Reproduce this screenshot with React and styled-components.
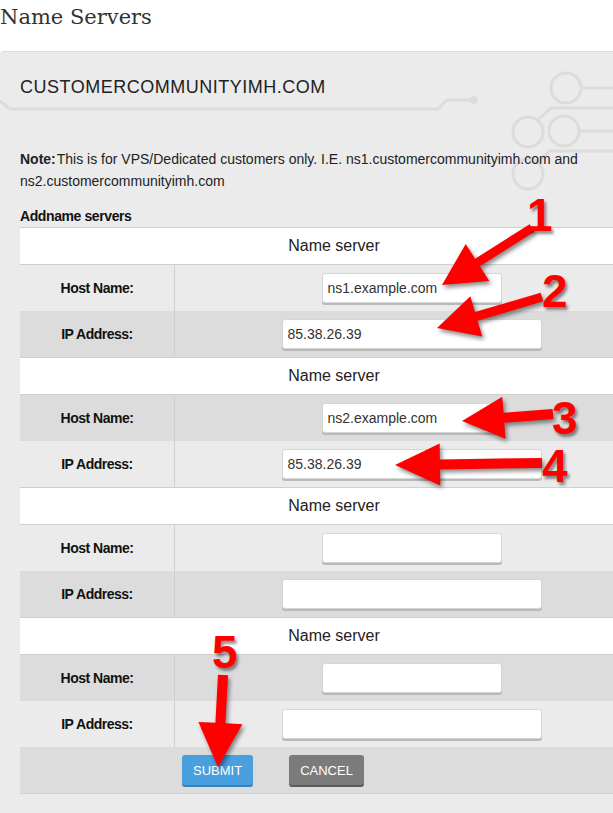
import React from 'react';
import styled, { createGlobalStyle } from 'styled-components';

const GlobalStyle = createGlobalStyle`
  body {
    margin: 0;
    background: #fff;
    font-family: "Liberation Sans", Arial, sans-serif;
    overflow: hidden;
  }
`;

const servers = [
  { host: 'ns1.example.com', ip: '85.38.26.39' },
  { host: 'ns2.example.com', ip: '85.38.26.39' },
  { host: '', ip: '' },
  { host: '', ip: '' },
];

// red callouts drawn on top of the screenshot
const arrows = [
  { from: [532, 228], to: [442, 285], w: 9, head: 42, half: 22 },
  { from: [542, 297], to: [437, 328], w: 9, head: 41, half: 21 },
  { from: [553, 414], to: [462, 421], w: 10, head: 42, half: 21 },
  { from: [542, 463], to: [395, 465], w: 10, head: 45, half: 21 },
  { from: [223, 675], to: [218, 767], w: 10, head: 44, half: 22 },
];

const callouts = [
  { n: 1, x: 527, y: 192 },
  { n: 2, x: 542, y: 268 },
  { n: 3, x: 552, y: 395 },
  { n: 4, x: 542, y: 443 },
  { n: 5, x: 212, y: 629 },
];

const arrowPoints = ({ from, to, w, head, half }) => {
  const [x1, y1] = from;
  const [x2, y2] = to;
  const len = Math.hypot(x2 - x1, y2 - y1);
  const ux = (x2 - x1) / len;
  const uy = (y2 - y1) / len;
  const px = -uy;
  const py = ux;
  const bx = x2 - ux * head;
  const by = y2 - uy * head;
  return [
    [x1 + (px * w) / 2, y1 + (py * w) / 2],
    [bx + (px * w) / 2, by + (py * w) / 2],
    [bx + px * half, by + py * half],
    [x2, y2],
    [bx - px * half, by - py * half],
    [bx - (px * w) / 2, by - (py * w) / 2],
    [x1 - (px * w) / 2, y1 - (py * w) / 2],
  ]
    .map((p) => p.map((v) => v.toFixed(1)).join(','))
    .join(' ');
};

const App = () => {
  return (
    <Page>
      <GlobalStyle />
      <PageTitle>Name Servers</PageTitle>
      <Panel>
        <Circuit width="613" height="200" viewBox="0 0 613 200">
          <g fill="none" stroke="#dcdcdc" strokeWidth="3">
            <polyline points="0,49 10,57 438,57 447,48 474,48" />
            <circle cx="566" cy="36" r="15" />
            <circle cx="528" cy="80" r="15" />
            <circle cx="564" cy="79" r="15" />
            <circle cx="528" cy="122" r="15" />
            <polyline points="581,36 613,36" />
            <polyline points="538,68 551,56 613,56" />
            <polyline points="579,79 613,79" />
            <polyline points="538,111 549,99 613,99" />
          </g>
          <circle cx="474" cy="48" r="4" fill="#dcdcdc" />
        </Circuit>

        <DomainTitle>CUSTOMERCOMMUNITYIMH.COM</DomainTitle>
        <Note>
          <b>Note:</b>
          <span>
            This is for VPS/Dedicated customers only. I.E. ns1.customercommunityimh.com and
            ns2.customercommunityimh.com
          </span>
        </Note>
        <AddLabel>Addname servers</AddLabel>

        <Table>
          {servers.map((s, i) => (
            <React.Fragment key={i}>
              <HeaderRow>Name server</HeaderRow>
              <FieldRow $dark={i % 2 === 1}>
                <LabelCell>Host Name:</LabelCell>
                <ValueCell>
                  <TextInput $width={180} value={s.host} readOnly />
                </ValueCell>
              </FieldRow>
              <FieldRow $dark={i % 2 === 0}>
                <LabelCell>IP Address:</LabelCell>
                <ValueCell>
                  <TextInput $width={260} value={s.ip} readOnly />
                </ValueCell>
              </FieldRow>
            </React.Fragment>
          ))}
          <ButtonRow>
            <Button $color="#4a9fdf" $shade="#3a7fb8">SUBMIT</Button>
            <Button $color="#7b7b7b" $shade="#5c5c5c">CANCEL</Button>
          </ButtonRow>
        </Table>
      </Panel>

      <Overlay width="613" height="813" viewBox="0 0 613 813">
        {arrows.map((a, i) => (
          <polygon key={i} points={arrowPoints(a)} fill="#ff0000" />
        ))}
      </Overlay>
      {callouts.map((c) => (
        <Callout key={c.n} style={{ left: c.x, top: c.y }}>
          {c.n}
        </Callout>
      ))}
    </Page>
  );
};

const Page = styled.div`
  position: relative;
  width: 613px;
  height: 813px;
  display: flex;
  flex-direction: column;
  overflow: hidden;
`;

const PageTitle = styled.h1`
  margin: 0;
  height: 51px;
  padding-top: 5px;
  box-sizing: border-box;
  font-family: "DejaVu Serif", serif;
  font-size: 21px;
  font-weight: normal;
  color: #333;
`;

const Panel = styled.div`
  position: relative;
  flex: 1;
  background: #ebebeb;
  border-top: 1px solid #dadada;
  border-top-left-radius: 4px;
  padding: 24px 0 0 20px;
`;

const Circuit = styled.svg`
  position: absolute;
  top: 0;
  left: 0;
`;

const DomainTitle = styled.h2`
  position: relative;
  margin: 0;
  font-size: 18px;
  line-height: 22px;
  font-weight: normal;
  letter-spacing: 0.5px;
  color: #222;
`;

const Note = styled.p`
  position: relative;
  margin: 50px 0 0;
  width: 590px;
  font-size: 14px;
  line-height: 22px;
  color: #222;

  b {
    font-weight: bold;
    margin-right: 1px;
  }
`;

const AddLabel = styled.div`
  position: relative;
  margin-top: 16px;
  height: 19px;
  font-size: 14px;
  font-weight: bold;
  letter-spacing: -0.4px;
  color: #111;
`;

const Table = styled.div`
  position: relative;
  width: 628px;
  border-bottom: 1px solid #cfcfcf;
`;

const HeaderRow = styled.div`
  height: 36px;
  display: flex;
  align-items: center;
  justify-content: center;
  background: #fff;
  border-top: 1px solid #cfcfcf;
  border-bottom: 1px solid #cfcfcf;
  font-size: 16px;
  color: #222;
`;

const FieldRow = styled.div`
  display: grid;
  grid-template-columns: 155px 1fr;
  height: 46px;
  background: ${(p) => (p.$dark ? '#dcdcdc' : '#ebebeb')};
`;

const LabelCell = styled.div`
  display: flex;
  align-items: center;
  justify-content: center;
  border-right: 1px solid #cfcfcf;
  font-size: 14px;
  font-weight: bold;
  letter-spacing: -0.5px;
  color: #111;
`;

const ValueCell = styled.div`
  display: flex;
  align-items: center;
  justify-content: center;
`;

const TextInput = styled.input`
  box-sizing: border-box;
  width: ${(p) => p.$width}px;
  height: 30px;
  margin-bottom: 1px;
  padding: 0 5px;
  border: 1px solid #d6d6d6;
  border-radius: 3px;
  box-shadow: 0 2px 0 #b9b9b9;
  background: #fff;
  font-family: "Liberation Sans", Arial, sans-serif;
  font-size: 14px;
  color: #333;
  outline: none;
`;

const ButtonRow = styled.div`
  display: flex;
  align-items: flex-start;
  gap: 36px;
  height: 46px;
  box-sizing: border-box;
  padding: 8px 0 0 162px;
  background: #dcdcdc;
`;

const Button = styled.button`
  height: 30px;
  padding: 0 11px;
  border: none;
  border-radius: 3px;
  background: ${(p) => p.$color};
  box-shadow: 0 2px 0 ${(p) => p.$shade};
  font-family: "Liberation Sans", Arial, sans-serif;
  font-size: 13px;
  color: #fff;
`;

const Overlay = styled.svg`
  position: absolute;
  top: 0;
  left: 0;
  pointer-events: none;
  filter: drop-shadow(2px 3px 2px rgba(0, 0, 0, 0.45));
`;

const Callout = styled.span`
  position: absolute;
  font-family: "Liberation Sans", Arial, sans-serif;
  font-size: 46px;
  line-height: 46px;
  font-weight: bold;
  color: #ff0000;
  text-shadow: 2px 3px 3px rgba(0, 0, 0, 0.45);
  pointer-events: none;
`;

export default App;
